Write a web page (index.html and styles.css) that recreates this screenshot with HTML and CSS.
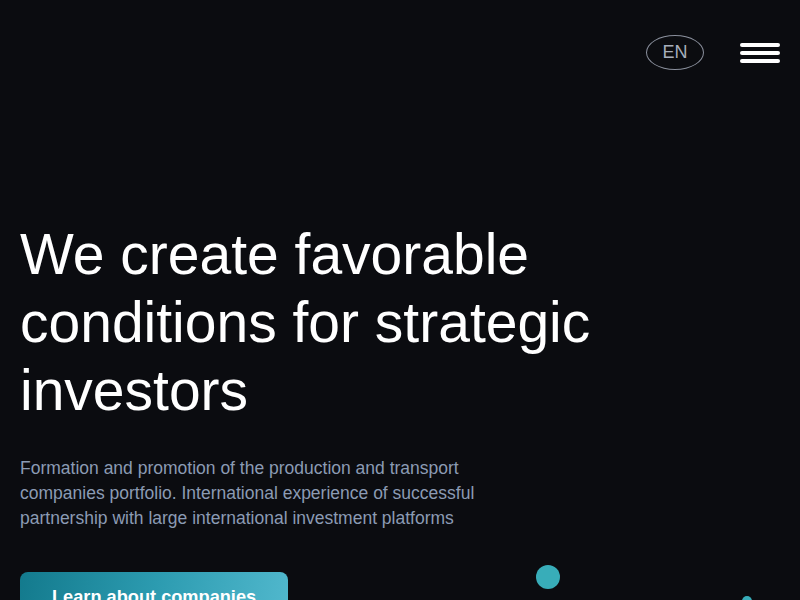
FILE: index.html
```html
<!DOCTYPE html>
<html lang="en">
<head>
<meta charset="utf-8">
<title>Investors</title>
<link rel="stylesheet" href="styles.css">
</head>
<body>
<div class="page">
  <header class="header">
    <button class="lang">EN</button>
    <button class="burger" aria-label="Menu">
      <span></span><span></span><span></span>
    </button>
  </header>
  <main class="hero">
    <h1 class="title">We create favorable<br>conditions for strategic<br>investors</h1>
    <p class="lead">Formation and promotion of the production and transport companies portfolio. International experience of successful partnership with large international investment platforms</p>
    <a class="cta" href="#">Learn about companies</a>
  </main>
  <span class="dot dot-big"></span>
  <span class="dot dot-small"></span>
</div>
</body>
</html>
```
FILE: styles.css
```css
html, body {
  margin: 0;
  padding: 0;
  background: #0b0c10;
  height: 100%;
  overflow: hidden;
}
body {
  font-family: "Liberation Sans", Arial, sans-serif;
  color: #fff;
}
.page {
  position: relative;
  min-height: 600px;
}
.header {
  display: flex;
  justify-content: flex-end;
  align-items: center;
  gap: 36px;
  padding: 35px 20px 0 0;
}
.lang {
  width: 58px;
  height: 35px;
  border: 1px solid #8a8f9c;
  border-radius: 50%;
  background: transparent;
  color: #a7aebb;
  font-family: "Liberation Sans", Arial, sans-serif;
  font-size: 18px;
  padding: 0;
  line-height: 33px;
}
.burger {
  display: flex;
  flex-direction: column;
  gap: 4px;
  width: 40px;
  padding: 0;
  background: none;
  border: 0;
}
.burger span {
  display: block;
  height: 4px;
  border-radius: 2px;
  background: #fff;
}
.hero {
  padding: 0 20px;
  margin-top: 150px;
}
.title {
  margin: 0;
  font-weight: 400;
  font-size: 57px;
  line-height: 68px;
}
.lead {
  margin: 32px 0 0;
  max-width: 490px;
  font-size: 17.5px;
  line-height: 25px;
  color: #8b9bb4;
}
.cta {
  display: inline-block;
  margin-top: 41px;
  padding: 14px 32px 12px;
  border-radius: 8px;
  background: linear-gradient(100deg, #137a8d 0%, #2c9bb0 50%, #51b8cd 100%);
  color: #fff;
  font-weight: 700;
  font-size: 18.2px;
  line-height: 22px;
  text-decoration: none;
}
.dot {
  position: absolute;
  border-radius: 50%;
  background: #38adb9;
}
.dot-big {
  width: 24px;
  height: 24px;
  left: 536px;
  top: 565px;
}
.dot-small {
  width: 10px;
  height: 10px;
  left: 742px;
  top: 596px;
}
```
